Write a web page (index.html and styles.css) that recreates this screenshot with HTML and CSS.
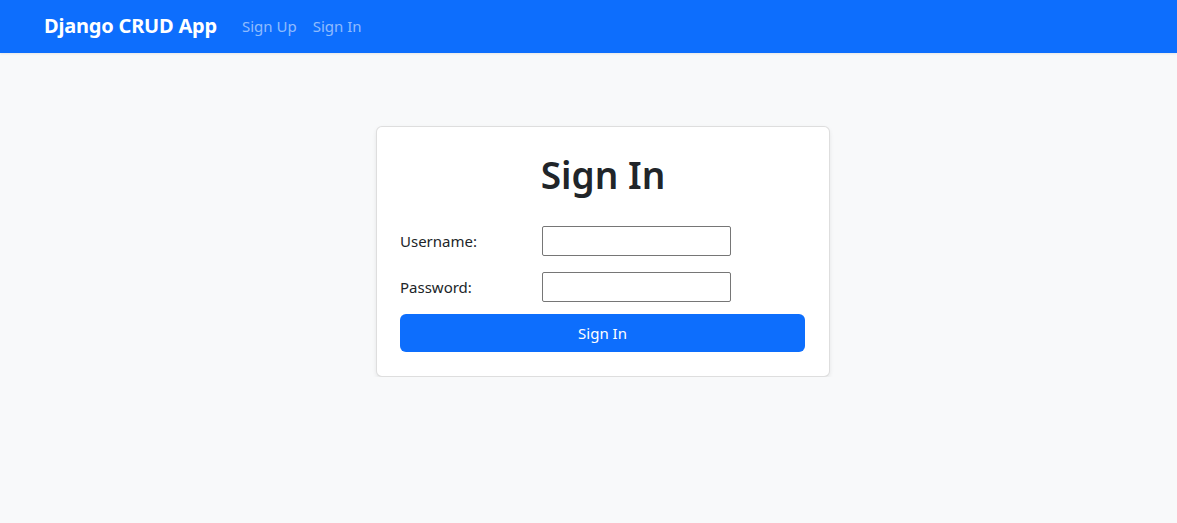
FILE: index.html
```html
<!DOCTYPE html>
<html>
<head>
	<meta charset="utf-8" />
	<title>Sign In</title>
	<link rel="stylesheet" href="styles.css">
</head>
<body>
	<nav class="navbar">
		<a class="brand" href="#">Django CRUD App</a>
		<a class="nav-link" href="#">Sign Up</a>
		<a class="nav-link" href="#">Sign In</a>
	</nav>

	<div class="page">
		<div class="card">
			<h1>Sign In</h1>
			<form class="form">
				<label for="username">Username:</label>
				<input type="text" id="username" name="username" />

				<label for="password">Password:</label>
				<input type="password" id="password" name="password" />

				<button type="button" class="btn">Sign In</button>
			</form>
		</div>
	</div>
</body>
</html>
```

FILE: styles.css
```css
body {
	margin: 0;
	font-family: "Noto Sans", "Open Sans", sans-serif;
	font-size: 15px;
	color: #212529;
	background-color: #f8f9fa;
}

/* Top bar */
.navbar {
	display: flex;
	align-items: center;
	height: 53px;
	padding: 0 44px 2px;
	box-sizing: border-box;
	background-color: #0d6efd;
	box-shadow: 0 1px 2px rgba(0, 0, 0, 0.08);
}

.brand {
	color: #fff;
	font-size: 20px;
	font-weight: 700;
	letter-spacing: -0.2px;
	text-decoration: none;
	margin-right: 25px;
}

.nav-link {
	color: rgba(255, 255, 255, 0.55);
	font-size: 15px;
	text-decoration: none;
	margin-right: 16px;
}

/* Card in the middle */
.page {
	display: flex;
	justify-content: center;
	padding-top: 73px;
}

.card {
	width: 406px;
	margin-left: 29px;
	padding: 24px 23px;
	background-color: #fff;
	border: 1px solid rgba(0, 0, 0, 0.13);
	border-radius: 6px;
	box-shadow: 0 2px 4px rgba(0, 0, 0, 0.08);
}

h1 {
	margin: 0 0 27px;
	text-align: center;
	font-size: 37px;
	font-weight: 600;
	line-height: 48px;
}

.form {
	display: grid;
	grid-template-columns: 142px 189px;
	row-gap: 16px;
	align-items: center;
}

.form input {
	box-sizing: border-box;
	width: 189px;
	height: 30px;
	border: 1px solid #767676;
	border-radius: 2px;
	padding: 1px 2px;
	font-size: 13px;
}

.btn {
	grid-column: 1 / -1;
	margin-top: -4px;
	width: 405px;
	height: 38px;
	border: none;
	border-radius: 6px;
	background-color: #0d6efd;
	color: #fff;
	font-family: inherit;
	font-size: 15px;
	cursor: pointer;
}
```
